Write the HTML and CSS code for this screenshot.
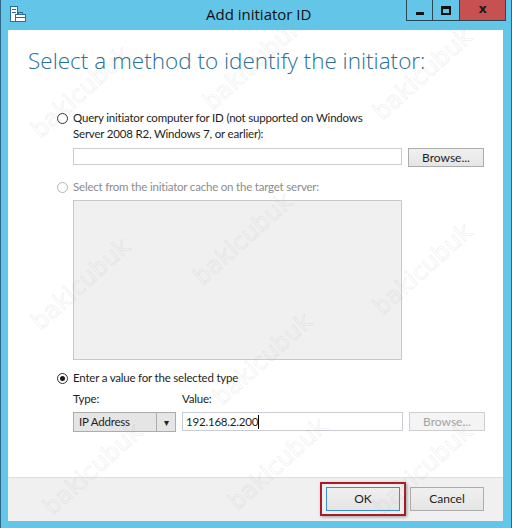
FILE: index.html
```html
<!DOCTYPE html>
<html lang="en">
<head>
    <meta charset="UTF-8">
    <title>Add initiator ID</title>
    <link rel="stylesheet" href="styles.css">
</head>
<body>
    <div class="window">
        <div class="titlebar">
            <svg class="app-icon" width="16" height="17" viewBox="0 0 16 17">
                <rect x="0.5" y="0.5" width="7" height="15" fill="#ffffff" stroke="#2a6d9a"/>
                <rect x="2" y="3" width="4" height="1" fill="#2a6d9a"/>
                <rect x="2" y="6" width="4" height="1" fill="#2a6d9a"/>
                <rect x="5.5" y="8.5" width="10" height="7" fill="#ffffff" stroke="#2a6d9a"/>
                <rect x="8.5" y="6.5" width="4" height="2" fill="none" stroke="#2a6d9a"/>
                <rect x="5.5" y="11" width="10" height="1" fill="#2a6d9a"/>
            </svg>
            <div class="title">Add initiator ID</div>
            <div class="caption-buttons">
                <div class="cap-btn cap-min"><span class="glyph-min"></span></div>
                <div class="cap-btn cap-max"><span class="glyph-max"></span></div>
                <div class="cap-btn cap-close">x</div>
            </div>
        </div>

        <div class="client">
            <div class="content">
                <h1 class="heading">Select a method to identify the initiator:</h1>

                <div class="option option-query">
                    <span class="radio"></span>
                    <div class="label">Query initiator computer for ID (not supported on Windows<br>Server 2008 R2, Windows 7, or earlier):</div>
                </div>
                <div class="field-row">
                    <div class="textbox"></div>
                    <button class="btn">Browse...</button>
                </div>

                <div class="option disabled">
                    <span class="radio"></span>
                    <div class="label">Select from the initiator cache on the target server:</div>
                </div>
                <div class="cache-list"></div>

                <div class="option option-value">
                    <span class="radio checked"></span>
                    <div class="label">Enter a value for the selected type</div>
                </div>
                <div class="type-grid">
                    <div class="small-label">Type:</div>
                    <div class="small-label">Value:</div>
                    <div></div>
                    <div class="select">
                        <span class="select-text">IP Address</span>
                        <span class="select-arrow">&#9662;</span>
                    </div>
                    <div class="textbox value-box">192.168.2.200<span class="caret"></span></div>
                    <button class="btn btn-disabled">Browse...</button>
                </div>
            </div>

            <div class="footer">
                <div class="highlight">
                    <button class="btn btn-default">OK</button>
                </div>
                <button class="btn">Cancel</button>
            </div>
        </div>

        <div class="watermarks">
            <span class="wm" style="left: 18px; top: 78px;">bakicubuk</span>
            <span class="wm" style="left: 190px; top: 50px;">bakicubuk</span>
            <span class="wm" style="left: 360px; top: 60px;">bakicubuk</span>
            <span class="wm" style="left: 18px; top: 270px;">bakicubuk</span>
            <span class="wm" style="left: 180px; top: 225px;">bakicubuk</span>
            <span class="wm" style="left: 360px; top: 255px;">bakicubuk</span>
            <span class="wm" style="left: 200px; top: 345px;">bakicubuk</span>
            <span class="wm" style="left: 30px; top: 455px;">bakicubuk</span>
            <span class="wm" style="left: 215px; top: 450px;">bakicubuk</span>
            <span class="wm" style="left: 360px; top: 455px;">bakicubuk</span>
        </div>
    </div>
</body>
</html>
```

FILE: styles.css
```css
body {
    margin: 0;
    font-family: Lato, "Open Sans", sans-serif;
    font-size: 11.5px;
    letter-spacing: -0.2px;
    color: #1e1e1e;
}

.window {
    position: relative;
    width: 512px;
    height: 528px;
    box-sizing: border-box;
    background: #63c6e9;
    border-left: 1px solid #2f6882;
    border-right: 1px solid #2f6882;
    overflow: hidden;
    display: flex;
    flex-direction: column;
}

.titlebar {
    height: 29px;
    display: flex;
    align-items: flex-start;
    position: relative;
}

.app-icon {
    margin: 6px 0 0 9px;
}

.title {
    position: absolute;
    left: 205px;
    top: 4px;
    font-family: "Open Sans", sans-serif;
    font-size: 15px;
    letter-spacing: 0;
    color: #111;
}

.caption-buttons {
    margin-left: auto;
    margin-right: 5px;
    display: flex;
}

.cap-btn {
    height: 21px;
    border: 1px solid #2d4654;
    border-top: none;
    display: flex;
    align-items: center;
    justify-content: center;
    box-sizing: border-box;
}

.cap-min {
    width: 27px;
}

.cap-max {
    width: 27px;
    border-left: none;
}

.cap-close {
    width: 46px;
    border-left: none;
    background: #c75050;
    color: #1c1c1c;
    font-family: "DejaVu Sans", sans-serif;
    font-weight: bold;
    font-size: 13px;
    padding-bottom: 3px;
}

.glyph-min {
    width: 8px;
    height: 3px;
    background: #111;
    margin-top: 6px;
}

.glyph-max {
    width: 6px;
    height: 4px;
    border: 2px solid #111;
    border-top-width: 3px;
}

.client {
    margin: 1px 0 0 7px;
    width: 495px;
    height: 491px;
    background: #ffffff;
    display: flex;
    flex-direction: column;
}

.content {
    flex: 1;
    padding: 0 0 0 49px;
}

.heading {
    margin: 16px 0 0 -29px;
    font-family: "Open Sans", sans-serif;
    font-size: 22.5px;
    font-weight: 300;
    letter-spacing: 0;
    color: #2a6f96;
    line-height: 30px;
}

.option {
    display: flex;
    align-items: flex-start;
    margin-top: 12px;
    line-height: 16px;
}

.option-query {
    margin-top: 34px;
}

.option-value {
    margin-top: 10px;
}

.option.disabled {
    color: #8c8c8c;
}

.radio {
    width: 11px;
    height: 11px;
    border: 1px solid #333;
    border-radius: 50%;
    box-sizing: border-box;
    margin: 3px 5px 0 0;
    flex: none;
    display: flex;
    align-items: center;
    justify-content: center;
    background: #fff;
}

.disabled .radio {
    border-color: #b4b4b4;
}

.radio.checked::after {
    content: "";
    width: 5px;
    height: 5px;
    border-radius: 50%;
    background: #1a1a1a;
}

.label {
    white-space: nowrap;
}

.field-row {
    display: flex;
    gap: 6px;
    margin: 6px 0 0 16px;
}

.textbox {
    width: 329px;
    height: 17px;
    box-sizing: border-box;
    border: 1px solid #c9ccd2;
    background: #fff;
}

.btn {
    width: 76px;
    height: 19px;
    box-sizing: border-box;
    border: 1px solid #acacac;
    background: linear-gradient(#f0f0f0, #e5e5e5);
    font-family: inherit;
    font-size: 12px;
    color: #1e1e1e;
    padding: 0;
    line-height: 16px;
}

.btn-disabled {
    color: #a3a3a3;
    border-color: #cfcfcf;
    background: #f4f4f4;
}

.cache-list {
    margin: 5px 0 0 16px;
    width: 329px;
    height: 160px;
    box-sizing: border-box;
    border: 1px solid #c9c9c9;
    background: #f0f0f0;
}

.type-grid {
    display: grid;
    grid-template-columns: 103px 221px 76px;
    column-gap: 6px;
    row-gap: 5px;
    margin: 5px 0 0 16px;
    line-height: 16px;
}

.small-label {
    height: 16px;
}

.select {
    height: 20px;
    box-sizing: border-box;
    border: 1px solid #acacac;
    background: #e5e5e5;
    display: flex;
    align-items: center;
}

.select-text {
    flex: 1;
    padding-left: 5px;
}

.select-arrow {
    width: 18px;
    height: 100%;
    border-left: 1px solid #acacac;
    display: flex;
    align-items: center;
    justify-content: center;
    font-size: 10px;
    color: #222;
}

.value-box {
    width: 221px;
    height: 19px;
    padding-left: 3px;
    line-height: 16px;
    display: flex;
    align-items: center;
}

.caret {
    display: inline-block;
    width: 1px;
    height: 14px;
    background: #000;
}

.footer {
    height: 44px;
    box-sizing: border-box;
    background: #f0f0f0;
    border-top: 1px solid #dfdfdf;
    display: flex;
    align-items: center;
    justify-content: flex-end;
    gap: 4px;
    padding: 0 19px 1px 0;
}

.highlight {
    border: 2px solid #a81c28;
    padding: 3px 4px;
    box-shadow: 1px 1px 3px rgba(0, 0, 0, 0.35);
}

.footer .btn {
    height: 24px;
    width: 74px;
}

.footer .btn-default {
    border-color: #3c8fd6;
}

.watermarks {
    position: absolute;
    inset: 0;
    pointer-events: none;
}

.wm {
    position: absolute;
    font-family: "DejaVu Sans", sans-serif;
    font-size: 24px;
    letter-spacing: 0;
    color: rgba(255, 255, 255, 0.05);
    -webkit-text-stroke: 1px rgba(120, 120, 120, 0.1);
    transform: rotate(-42deg);
    white-space: nowrap;
}
```
